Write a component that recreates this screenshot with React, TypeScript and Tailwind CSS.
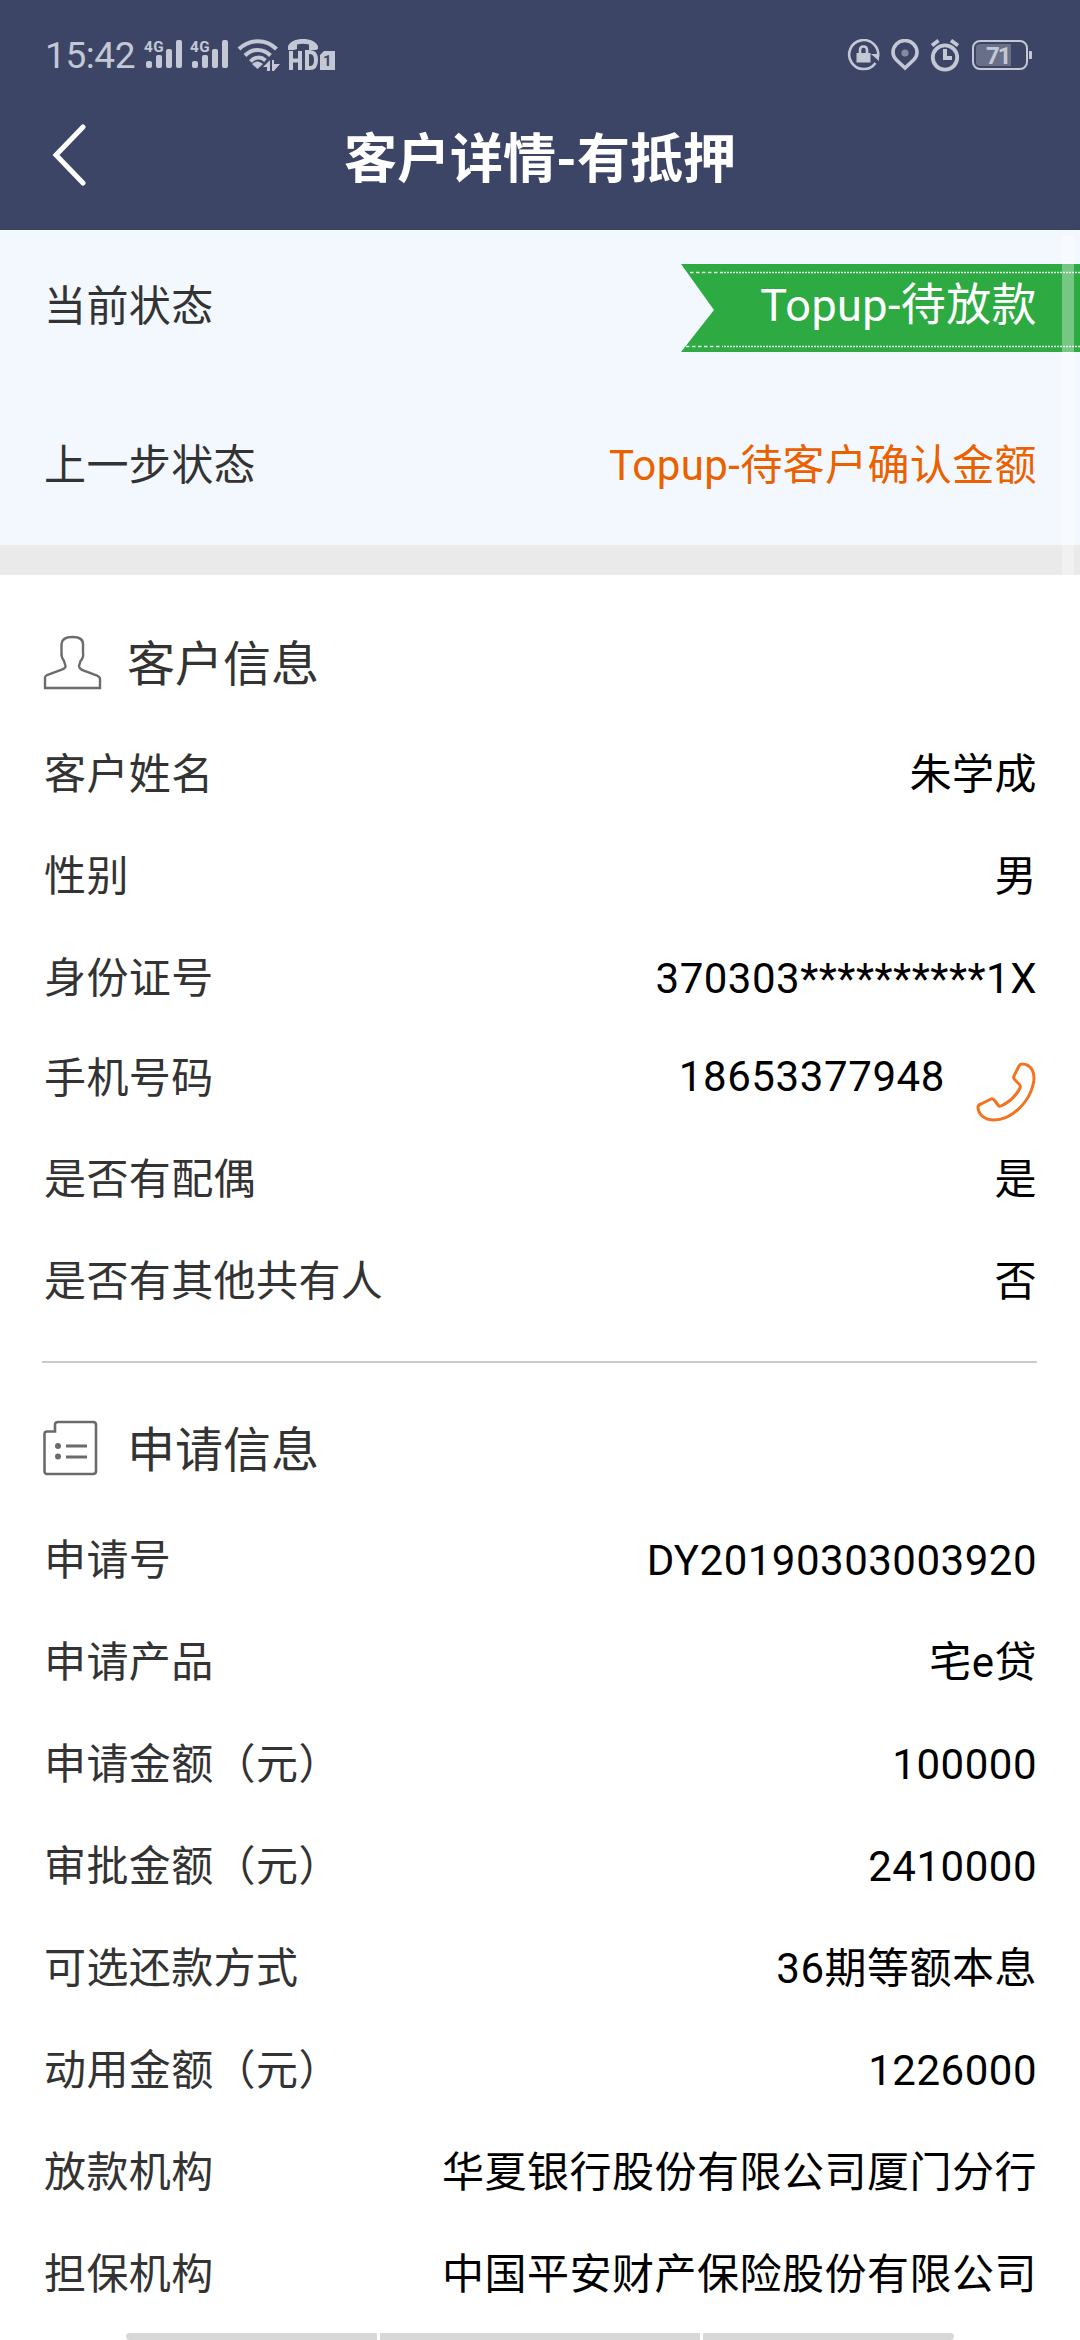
import React from "react";

interface RowProps {
  label: string;
  value: string;
}

const customerRows: RowProps[] = [
  { label: "客户姓名", value: "朱学成" },
  { label: "性别", value: "男" },
  { label: "身份证号", value: "370303**********1X" },
];

const ownerRows: RowProps[] = [
  { label: "是否有配偶", value: "是" },
  { label: "是否有其他共有人", value: "否" },
];

const applicationRows: RowProps[] = [
  { label: "申请号", value: "DY20190303003920" },
  { label: "申请产品", value: "宅e贷" },
  { label: "申请金额（元）", value: "100000" },
  { label: "审批金额（元）", value: "2410000" },
  { label: "可选还款方式", value: "36期等额本息" },
  { label: "动用金额（元）", value: "1226000" },
  { label: "放款机构", value: "华夏银行股份有限公司厦门分行" },
  { label: "担保机构", value: "中国平安财产保险股份有限公司" },
];

function Row({ label, value }: RowProps) {
  return (
    <div className="flex h-[102px] items-center justify-between">
      <span className="text-[#333333]">{label}</span>
      <span className="tracking-[0.5px] text-black">{value}</span>
    </div>
  );
}

function Signal() {
  return (
    <svg width="40" height="32" viewBox="0 0 40 32" fill="currentColor">
      <text x="0" y="13" fontSize="14.5" fontWeight="700" textLength="20" lengthAdjust="spacingAndGlyphs">
        4G
      </text>
      <rect x="2" y="22" width="6" height="7" rx="2" />
      <rect x="12" y="16" width="6" height="13" rx="2" />
      <rect x="22" y="10" width="6" height="19" rx="2" />
      <rect x="32" y="1" width="6" height="28" rx="2" />
    </svg>
  );
}

function StatusBar() {
  return (
    <div className="flex h-[110px] items-center justify-between pl-[45px] pr-[47px] text-[#c4c8d4]">
      <div className="flex h-8 items-center">
        <span className="w-[99px] pt-[2px] text-[37px] leading-8 tracking-[-0.4px]">15:42</span>
        <span className="mr-[6px]">
          <Signal />
        </span>
        <Signal />
        <svg className="ml-[7px]" width="44" height="32" viewBox="0 0 44 32" fill="none" stroke="currentColor" strokeWidth="4">
          <path d="M2 10C13 -0.5 29 -0.5 39.5 10" />
          <path d="M8 16.5C15.500 9 26 9 33.500 16.5" />
          <path d="M13.500 22.500C18 17.500 24 17.500 28.500 21.500" />
          <path d="M15 25Q20.500 20 26 25L20.500 30Z" fill="currentColor" stroke="none" />
          <path d="M33 21V32H30V28H26ZM35 21H37V25H43L36 33H35Z" fill="currentColor" stroke="none" />
        </svg>
        <svg className="ml-[7px]" width="50" height="34" viewBox="0 0 50 34" fill="currentColor">
          <path d="M0 12V8C3 2 10 1 15 1S27 2 30 8V11L28 12H21V6.500Q15 5 9 6.500V11L6 12Z" />
          <path
            d="M3 13V32M12 13V32M3 22.500H12M19 14V30H22Q28 30 28 22T22 14Z"
            fill="none"
            stroke="currentColor"
            strokeWidth="4"
          />
          <path d="M36 13H47V32H32V17Z" />
          <text x="35" y="28" fontSize="15" fontWeight="700" fill="#3c4566">
            1
          </text>
        </svg>
      </div>
      <div className="flex h-8 items-center">
        <svg width="33" height="33" viewBox="0 0 33 33" fill="none" stroke="currentColor" strokeWidth="2.600">
          <path d="M28.500 24A14.500 14.500 0 1 1 31 18" />
          <path d="M24 15H32V22Z" fill="currentColor" stroke="none" />
          <rect x="9.500" y="14" width="14" height="9.500" fill="currentColor" stroke="none" />
          <path d="M13 15V11Q13 7.500 16.500 7.500T20 11V15" />
        </svg>
        <svg className="ml-[11px]" width="28" height="33" viewBox="0 0 28 33" fill="none">
          <path d="M14 29L5.500 21Q2 17.500 2 13.500A12 12 0 0 1 26 13.500Q26 17.500 22.500 21Z" stroke="currentColor" strokeWidth="3.600" />
          <circle cx="14" cy="14" r="3.600" fill="#858b9f" />
        </svg>
        <svg className="ml-[11px]" width="30" height="33" viewBox="0 0 30 33" fill="none" stroke="currentColor" strokeWidth="3.800">
          <circle cx="15" cy="18.500" r="12.200" />
          <path d="M2 6.500L8.500 1.500M21 1.500L28 6.500" />
          <path d="M15 10V19H22" strokeWidth="4" />
        </svg>
        <svg className="ml-[12px]" width="61" height="31" viewBox="0 0 61 31">
          <rect x="1" y="1" width="54" height="28" rx="7" fill="none" stroke="currentColor" strokeWidth="2" />
          <path d="M8 4H39V26H8Q4 26 4 22V8Q4 4 8 4Z" fill="#687089" />
          <path d="M57 11H59Q60 11 60 12V18Q60 19 59 19H57Z" fill="currentColor" />
          <text x="14" y="24" fontSize="24" fontWeight="700" fill="currentColor" textLength="26">
            71
          </text>
        </svg>
      </div>
    </div>
  );
}

function Ribbon() {
  return (
    <div className="relative h-[88px] w-[399px]">
      <svg className="absolute inset-0" width="399" height="88" viewBox="0 0 399 88">
        <path d="M0 0H399V88H0L33 46Z" fill="#2daa42" />
        <path d="M9 8.500H42M5 82.500H42" stroke="#e4f5e7" strokeWidth="1.600" strokeDasharray="3.500 2.500" />
        <path d="M43 8.500H399M43 82.500H399" stroke="#e4f5e7" strokeWidth="1.600" strokeDasharray="2 1" />
      </svg>
      <span className="absolute right-[43px] top-0 text-[45px] leading-[83px] tracking-[0.4px] text-white">
        Topup-待放款
      </span>
    </div>
  );
}

export default function App() {
  return (
    <div className="relative flex h-[2340px] w-[1080px] flex-col overflow-hidden bg-white font-[Roboto,'Noto_Sans_CJK_SC',sans-serif] text-[42px] leading-[62px] tracking-[0.4px]">
      <header className="h-[230px] bg-[#3c4566]">
        <StatusBar />
        <div className="grid h-[94px] grid-cols-[120px_1fr_120px] items-center">
          <svg className="mb-[6px] ml-[52px]" width="36" height="64" viewBox="0 0 36 64" fill="none">
            <path d="M31 5L4 33L31 61" stroke="white" strokeWidth="5" strokeLinecap="round" />
          </svg>
          <h1 className="pt-[5px] text-center text-[53px] font-bold tracking-normal text-white">客户详情-有抵押</h1>
        </div>
      </header>

      <section className="h-[315px] bg-[#f3f8ff] pt-[34px]">
        <div className="flex h-[88px] justify-between pl-[44px]">
          <span className="leading-[85px] text-[#333333]">当前状态</span>
          <Ribbon />
        </div>
        <div className="mt-[66px] flex h-[96px] items-center justify-between pl-[44px] pr-[43px]">
          <span className="text-[#333333]">上一步状态</span>
          <span className="text-[#eb6100]">Topup-待客户确认金额</span>
        </div>
      </section>
      <div className="h-[30px] bg-[#eaeaea]" />

      <section className="h-[786px] pl-[44px] pr-[43px]">
        <div className="flex h-[149px] items-center pt-[27px]">
          <svg className="-ml-[1px]" width="60" height="56" viewBox="0 0 60 56" fill="none" stroke="#6b6b6b" strokeWidth="2.400">
            <path d="M2 53V43Q2 41 4 40L18 35Q23 33 22.500 31L21 26Q18 22 18.500 18V9Q19 2 29.500 2T40 9V18Q41 22 37.500 26L36 31Q36 33 39 35L54 40.500Q57 42 57 44V53Z" />
          </svg>
          <h2 className="ml-[24px] pt-[3px] text-[48px] tracking-normal text-[#333333]">客户信息</h2>
        </div>
        {customerRows.map((row) => (
          <Row key={row.label} {...row} />
        ))}
        <div className="flex h-[99px] items-center justify-between">
          <span className="pb-[2px] text-[#333333]">手机号码</span>
          <div className="flex items-center">
            <span className="pb-[6px] tracking-[0.6px] text-black">18653377948</span>
            <svg className="ml-[31px] mr-[1px] mt-[24px]" width="60" height="60" viewBox="0 0 60 60" fill="none" stroke="#f3741f" strokeWidth="3" strokeLinejoin="round">
              <path d="M46 2C56 2 60 12 57 23C53 40 36 58 18 58C8 58 2 52 2 45Q2 43 5 42L15 37Q17 36 19 39L22 43Q23 45 25 44Q38 38 44 26Q45 24 43 22L39 18Q37 16 38 14L43 4Q44 2 46 2Z" />
            </svg>
          </div>
        </div>
        {ownerRows.map((row) => (
          <Row key={row.label} {...row} />
        ))}
      </section>

      <section className="ml-[42px] mr-[43px] border-t-2 border-[#cacbd0] pl-[2px]">
        <div className="flex h-[147px] items-center pt-[23px]">
          <svg className="-ml-[1px]" width="56" height="56" viewBox="0 0 56 56" fill="none" stroke="#6b6b6b" strokeWidth="2.600">
            <path d="M12 11V5Q12 2 15 2H50Q53 2 53 5V51Q53 54 50 54H4Q1.500 54 1.500 51V14Q1.500 11.500 4 11.500H12Z" />
            <path d="M23 26H44M23 37H44" strokeWidth="3" />
            <g fill="#6b6b6b" stroke="none">
              <circle cx="15" cy="26" r="3" />
              <circle cx="15" cy="36.500" r="3" />
            </g>
          </svg>
          <h2 className="ml-[28px] pt-[6px] text-[48px] tracking-normal text-[#333333]">申请信息</h2>
        </div>
        {applicationRows.map((row) => (
          <Row key={row.label} {...row} />
        ))}
      </section>

      {/* scroll thumb and gesture bars sit over the page */}
      <div className="absolute left-[1062px] top-[236px] h-[339px] w-[12px] bg-white/35" />
      <div className="absolute bottom-0 left-[126px] flex h-[7px] w-[828px] gap-[3px]">
        <span className="w-[251px] rounded-l-[4px] bg-[#d8d8d8]" />
        <span className="w-[320px] bg-[#d8d8d8]" />
        <span className="flex-1 rounded-r-[4px] bg-[#d8d8d8]" />
      </div>
    </div>
  );
}
